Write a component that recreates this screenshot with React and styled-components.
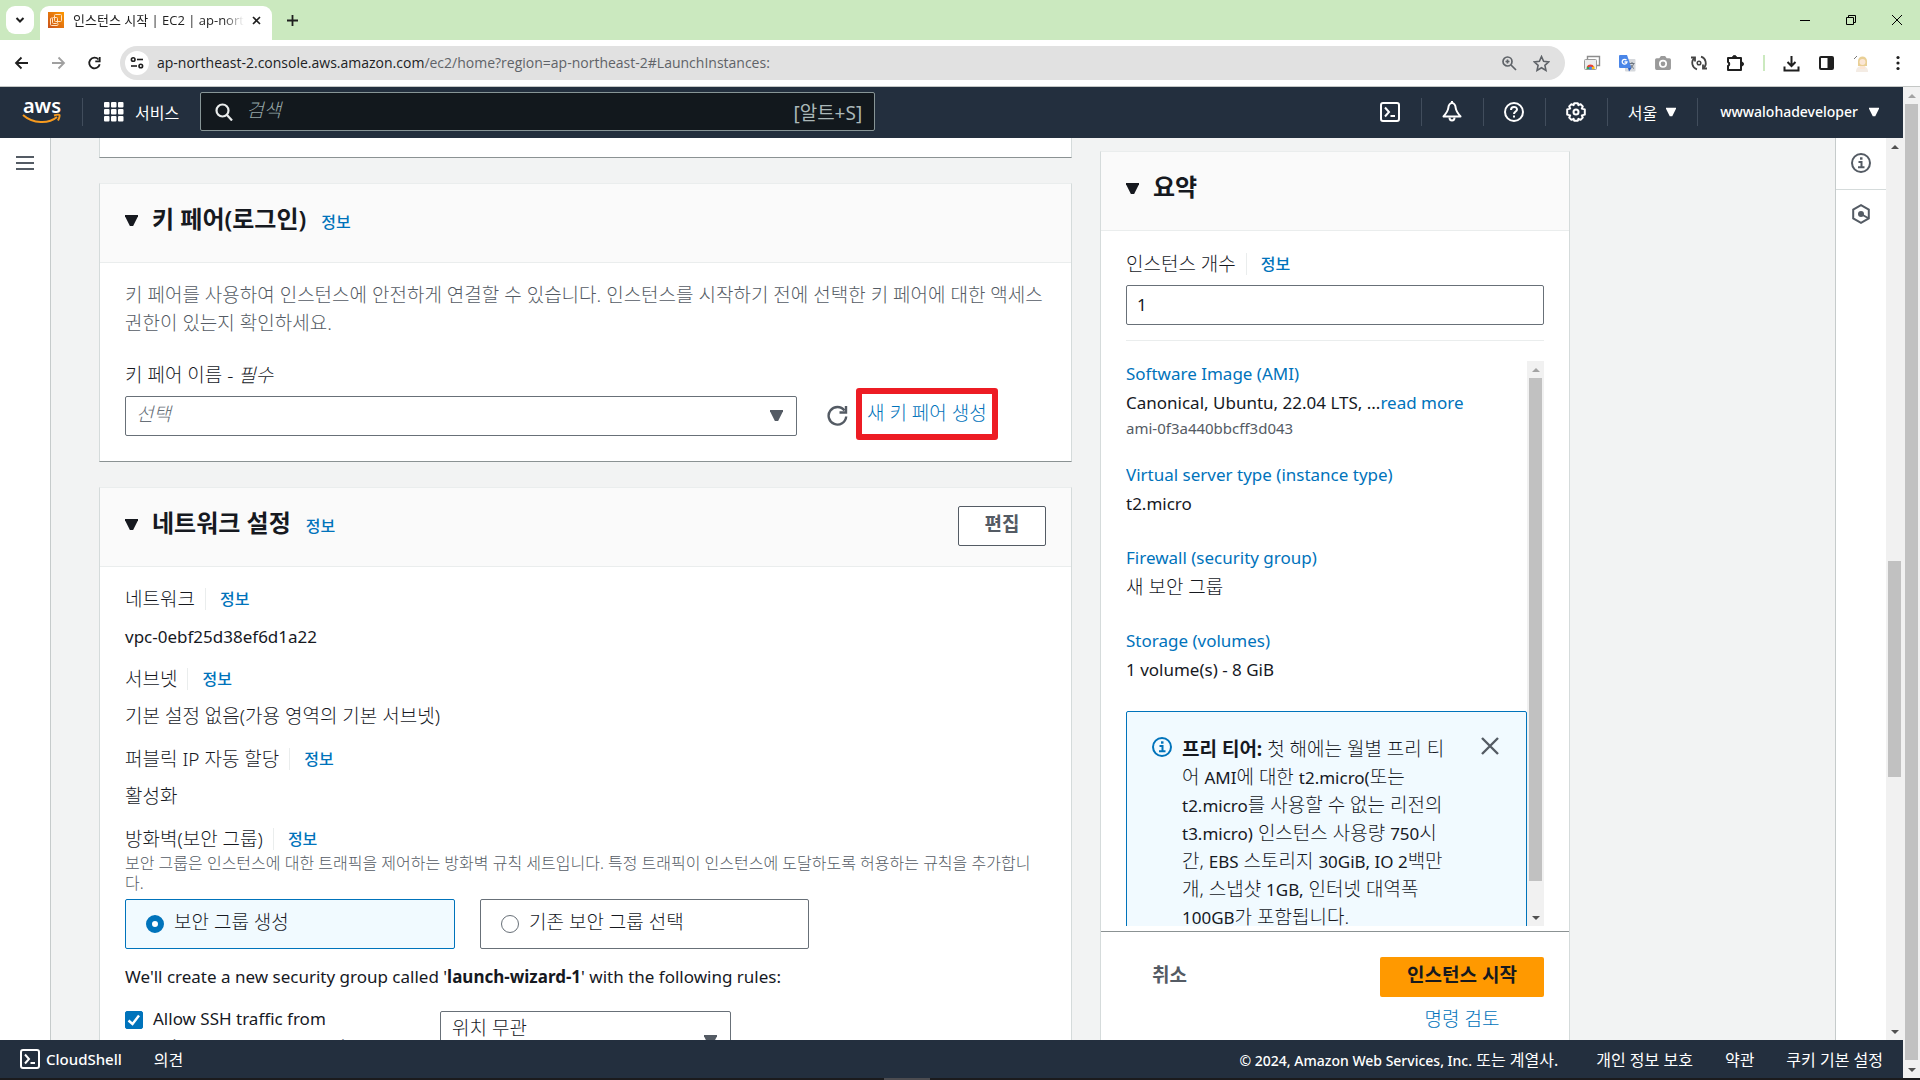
import React, { Component } from "react";
import styled, { createGlobalStyle, ThemeProvider } from "styled-components";

const theme = {
  white: "#ffffff",
  dark: "#16191f",
  nav: "#232f3e",
  grey: "#545b64",
  muted: "#687078",
  page: "#f2f3f3",
  line: "#eaeded",
  link: "#0073bb",
  orange: "#ff9900",
  font: {
    family: '"Noto Sans", "Noto Sans CJK KR", sans-serif',
    browser: '"Open Sans", "Noto Sans CJK KR", sans-serif',
    size: { xs: "15px", s: "16px", m: "17px", l: "19px", xl: "24px" }
  }
};

const GlobalStyle = createGlobalStyle`
  * {
    box-sizing: border-box;
  }
  body {
    margin: 0;
    overflow: hidden;
    font-family: ${theme.font.family};
    font-size: ${theme.font.size.l};
    color: ${theme.dark};
  }
  button, input, select {
    font: inherit;
    color: inherit;
    margin: 0;
  }
  a {
    text-decoration: none;
    color: ${theme.link};
  }
  b {
    font-weight: 700;
  }
  h2, p, dl, dd, dt {
    margin: 0;
  }
  svg {
    display: block;
    flex: none;
  }
`;

const Window = styled.div`
  height: 100vh;
  display: flex;
  flex-direction: column;
  overflow: hidden;
  background: ${({ theme }) => theme.white};
`;

/* browser chrome */

const TabStrip = styled.div`
  height: 40px;
  flex: none;
  display: flex;
  align-items: flex-start;
  padding: 6px 18px 0 6px;
  background: #cbe9bf;
`;
const TabSearch = styled.button`
  width: 28px;
  height: 28px;
  border: none;
  border-radius: 9px;
  padding: 0;
  display: flex;
  align-items: center;
  justify-content: center;
  background: ${({ theme }) => theme.white};
`;
const Tab = styled.div`
  width: 232px;
  height: 34px;
  margin-left: 6px;
  padding: 0 11px 6px 8px;
  display: flex;
  align-items: center;
  border-radius: 9px 9px 0 0;
  background: ${({ theme }) => theme.white};
`;
const TabTitle = styled.span`
  flex: 1;
  margin: 0 8px 0 9px;
  overflow: hidden;
  white-space: nowrap;
  font-family: ${({ theme }) => theme.font.browser};
  font-size: 13px;
  line-height: 20px;
  color: #1f1f1f;
  mask-image: linear-gradient(to right, #000 88%, transparent);
`;
const PlainButton = styled.button`
  border: none;
  padding: 0;
  background: none;
  display: flex;
  align-items: center;
  justify-content: center;
  cursor: pointer;
`;
const NewTab = styled(PlainButton)`
  height: 28px;
  margin-left: 15px;
`;
const WindowButtons = styled.div`
  height: 28px;
  display: flex;
  align-items: center;
  gap: 36px;
  margin-left: auto;
`;
const Toolbar = styled.div`
  height: 47px;
  flex: none;
  display: flex;
  align-items: center;
  padding: 0 13px;
  border-bottom: 1px solid #c4c7c5;
`;
const ToolbarNav = styled.div`
  display: flex;
  gap: 20px;
  margin-right: 17px;
`;
const AddressBar = styled.div`
  flex: 1;
  height: 34px;
  display: flex;
  align-items: center;
  padding: 0 15px 0 5px;
  border-radius: 17px;
  background: #e1e1e1;
`;
const SiteInfo = styled(PlainButton)`
  width: 24px;
  height: 24px;
  border-radius: 12px;
  background: ${({ theme }) => theme.white};
`;
const Url = styled.span`
  flex: 1;
  margin-left: 8px;
  font-family: ${({ theme }) => theme.font.browser};
  font-size: 14px;
  line-height: 20px;
  color: #5f6368;
`;
const UrlHost = styled.span`
  color: #202124;
`;
const AddressIcons = styled.div`
  display: flex;
  gap: 16px;
`;
const Extensions = styled.div`
  display: flex;
  align-items: center;
  gap: 18px;
  margin-left: 18px;
`;
const ExtensionsLine = styled.span`
  width: 2px;
  height: 16px;
  background: #cbe9bf;
`;

/* scrollbars are drawn so that they look alike everywhere */

const Bar = styled.div`
  width: 17px;
  flex: none;
  display: flex;
  flex-direction: column;
  align-items: center;
  background: #f1f1f1;
`;
const BarArrow = styled.span`
  height: 17px;
  flex: none;
  display: flex;
  align-items: center;
`;
const BarTrack = styled.span`
  flex: 1;
  display: flex;
  flex-direction: column;
`;
const BarSpace = styled.span`
  flex: ${({ $grow }) => $grow};
`;
const BarThumb = styled.span`
  flex: ${({ $grow }) => $grow};
  width: 13px;
  background: #c1c1c1;
`;

/* console frame */

const Viewport = styled.div`
  flex: 1;
  min-height: 0;
  display: flex;
`;
const Console = styled.div`
  flex: 1;
  min-width: 0;
  display: flex;
  flex-direction: column;
`;
const NavBar = styled.header`
  height: 51px;
  flex: none;
  display: flex;
  align-items: center;
  padding: 0 0 2px 22px;
  background: ${({ theme }) => theme.nav};
  color: ${({ theme }) => theme.white};
`;
const Logo = styled.a`
  width: 40px;
  display: flex;
  flex-direction: column;
  align-items: center;
  margin-right: 20px;
  font-size: 20px;
  font-weight: 600;
  line-height: 14px;
  color: ${({ theme }) => theme.white};
`;
const NavLine = styled.span`
  width: 1px;
  height: 28px;
  background: #414d5c;
`;
const Services = styled(PlainButton)`
  gap: 11px;
  margin: 0 21px;
  font-size: ${({ theme }) => theme.font.size.s};
`;
const Search = styled.label`
  flex: 0 1 675px;
  height: 39px;
  display: flex;
  align-items: center;
  padding: 0 12px 0 14px;
  border: 1px solid #879596;
  border-radius: 2px;
  background: #12181d;
  color: #aab7b8;
`;
const SearchInput = styled.input`
  flex: 1;
  min-width: 0;
  height: 30px;
  margin-left: 13px;
  padding: 0 0 3px;
  border: none;
  outline: none;
  background: none;
  &::placeholder {
    color: #95a5a6;
    font-style: italic;
    font-weight: 300;
    opacity: 1;
  }
`;
const NavRight = styled.div`
  display: flex;
  align-items: center;
  margin-left: auto;
`;
const NavItem = styled(PlainButton)`
  height: 28px;
  padding: 0 21px 0 20px;
  gap: 9px;
  border-left: ${({ $first }) => ($first ? "none" : "1px solid #414d5c")};
  font-size: ${({ theme }) => theme.font.size.s};
`;
const Account = styled(NavItem)`
  padding: 0 24px 0 22px;
  gap: 11px;
`;
const Middle = styled.div`
  flex: 1;
  min-height: 0;
  display: flex;
`;
const Rail = styled.nav`
  width: 51px;
  flex: none;
  display: flex;
  flex-direction: column;
  background: ${({ theme }) => theme.white};
  border: solid #c6cbcb;
  border-width: ${({ $side }) => ($side === "left" ? "0 1px 0 0" : "0 0 0 1px")};
`;
const RailButton = styled(PlainButton)`
  height: 51px;
  padding-bottom: 2px;
  color: ${({ theme }) => theme.grey};
  & + & {
    border-top: 1px solid #d5dbdb;
  }
`;
const Content = styled.main`
  flex: 1;
  min-width: 0;
  overflow: hidden;
  padding-left: 48px;
  background: ${({ theme }) => theme.page};
`;
const Columns = styled.div`
  height: 100%;
  max-width: 1471px;
  display: grid;
  grid-template-columns: minmax(0, 1fr) 470px;
  gap: 28px;
`;
const Forms = styled.div`
  display: flex;
  flex-direction: column;
  gap: 25px;
  min-height: 0;
`;
const Card = styled.section`
  flex: none;
  background: ${({ theme }) => theme.white};
  border: 1px solid #d5dbdb;
  border-top-color: ${({ theme }) => theme.line};
  border-bottom-color: #8b9293;
`;
const CardTail = styled(Card)`
  height: 20px;
  border-top: none;
`;
const CardHeader = styled.div`
  height: 79px;
  flex: none;
  display: flex;
  align-items: center;
  padding: 0 25px 2px;
  background: #fafafa;
  border-bottom: 1px solid ${({ theme }) => theme.line};
  > svg {
    margin-bottom: 3px;
  }
`;
const CardTitle = styled.h2`
  margin: 0 15px 6px 14px;
  font-size: ${({ theme }) => theme.font.size.xl};
  font-weight: 600;
  line-height: 32px;
`;
const Info = styled.a`
  font-size: ${({ theme }) => theme.font.size.s};
  font-weight: 500;
  line-height: 22px;
`;
const CardBody = styled.div`
  padding: 18px 25px 25px;
  font-weight: 300;
`;
const Description = styled.p`
  line-height: 28px;
  color: ${({ theme }) => theme.grey};
`;
const FieldLabel = styled.label`
  display: block;
  margin-top: 24px;
  line-height: 28px;
`;
const Field = styled.div`
  display: flex;
  align-items: center;
  margin-top: 7px;
`;
const SelectBox = styled.div`
  position: relative;
  width: ${({ $width }) => $width};
  color: ${({ theme }) => theme.grey};
`;
const Select = styled.select`
  width: 100%;
  height: ${({ $tall }) => ($tall ? "60px" : "40px")};
  padding: ${({ $tall }) => ($tall ? "0 11px 26px" : "0 10px 5px")};
  appearance: none;
  border: 1px solid ${({ theme }) => theme.muted};
  border-radius: 2px;
  background: ${({ theme }) => theme.white};
  font-style: ${({ $empty }) => ($empty ? "italic" : "normal")};
  color: ${({ $empty, theme }) => ($empty ? theme.muted : theme.dark)};
`;
const SelectArrow = styled.span`
  position: absolute;
  right: 14px;
  top: 0;
  bottom: 0;
  display: flex;
  align-items: center;
  padding-bottom: 2px;
  pointer-events: none;
`;
const Refresh = styled(PlainButton)`
  margin: 0 8px 0 30px;
  padding-bottom: 2px;
  color: ${({ theme }) => theme.grey};
`;
const Highlight = styled.a`
  height: 52px;
  margin: -8px 0 -4px;
  padding: 0 5px;
  border: 6px solid #ed1c24;
  border-radius: 3px;
  line-height: 38px;
`;
const Edit = styled.button`
  width: 88px;
  height: 40px;
  margin-left: auto;
  padding: 0 0 6px;
  border: 1px solid ${({ theme }) => theme.grey};
  border-radius: 2px;
  background: ${({ theme }) => theme.white};
  color: ${({ theme }) => theme.grey};
  font-size: ${({ theme }) => theme.font.size.l};
  font-weight: 600;
`;
const Term = styled.dt`
  display: flex;
  align-items: center;
  line-height: 28px;
`;
const TermInfo = styled(Info)`
  margin-left: 10px;
  padding-left: 14px;
  border-left: 1px solid ${({ theme }) => theme.line};
`;
const Detail = styled.dd`
  height: 28px;
  margin: 9px 0 15px;
  line-height: 28px;
`;
const English = styled.span`
  font-size: ${({ theme }) => theme.font.size.m};
  font-weight: 400;
  line-height: 1;
`;
const Hint = styled.p`
  margin-bottom: 6px;
  font-size: ${({ theme }) => theme.font.size.s};
  line-height: 20px;
  color: ${({ theme }) => theme.grey};
`;
const Tiles = styled.div`
  display: grid;
  grid-template-columns: 330px 329px;
  gap: 25px;
`;
const Tile = styled.label`
  height: 50px;
  display: flex;
  align-items: center;
  gap: 10px;
  padding: 0 20px;
  border: 1px solid ${({ $on, theme }) => ($on ? theme.link : theme.muted)};
  border-radius: 2px;
  background: ${({ $on, theme }) => ($on ? "#f1faff" : theme.white)};
`;
const TileText = styled.span`
  padding-bottom: 6px;
`;
const Radio = styled.input`
  appearance: none;
  width: 18px;
  height: 18px;
  border-radius: 50%;
  border: 1px solid ${({ theme }) => theme.muted};
  background: ${({ theme }) => theme.white};
  &:checked {
    border: 6px solid ${({ theme }) => theme.link};
  }
`;
const Sentence = styled.p`
  margin: 14px 0;
  font-size: ${({ theme }) => theme.font.size.m};
  font-weight: 400;
  line-height: 28px;
`;
const RuleRow = styled.div`
  display: grid;
  grid-template-columns: 288px 291px;
  gap: 27px;
  align-items: start;
  margin-top: 20px;
`;
const CheckLabel = styled.label`
  display: grid;
  grid-template-columns: 18px 1fr;
  column-gap: 10px;
  align-items: start;
  font-size: ${({ theme }) => theme.font.size.m};
  font-weight: 400;
  line-height: 15px;
`;
const CheckBox = styled.span`
  position: relative;
  width: 18px;
  height: 18px;
`;
const Check = styled.input`
  appearance: none;
  display: block;
  width: 18px;
  height: 18px;
  border-radius: 2px;
  border: 1px solid ${({ theme }) => theme.muted};
  &:checked {
    border-color: ${({ theme }) => theme.link};
    background: ${({ theme }) => theme.link};
  }
`;
const CheckMark = styled.svg`
  position: absolute;
  left: 0;
  top: 0;
  pointer-events: none;
`;
const CheckHint = styled.span`
  grid-column: 2;
  margin-top: 5px;
  font-size: ${({ theme }) => theme.font.size.xs};
  line-height: 20px;
  color: ${({ theme }) => theme.muted};
`;

/* summary */

const Summary = styled(Card)`
  display: flex;
  flex-direction: column;
  min-height: 0;
  margin-top: 13px;
  border-bottom: none;
`;
const SummaryBody = styled.div`
  flex: 1;
  min-height: 0;
  display: flex;
  flex-direction: column;
  padding: 19px 25px 5px;
  font-weight: 300;
`;
const SummaryLabel = styled.div`
  display: flex;
  align-items: center;
  line-height: 28px;
`;
const CountInput = styled.input`
  height: 40px;
  flex: none;
  margin: 7px 0 15px;
  padding: 0 10px 1px;
  border: 1px solid ${({ theme }) => theme.muted};
  border-radius: 2px;
  font-size: ${({ theme }) => theme.font.size.m};
  font-weight: 400;
`;
const ScrollArea = styled.div`
  flex: 1;
  min-height: 0;
  display: flex;
  padding-top: 20px;
  border-top: 1px solid ${({ theme }) => theme.line};
`;
const ScrollContent = styled.div`
  flex: 1;
  min-width: 0;
  overflow: hidden;
`;
const Choice = styled.div`
  margin-bottom: 25px;
`;
const ChoiceLink = styled.a`
  display: block;
  font-size: ${({ theme }) => theme.font.size.m};
  font-weight: 400;
  line-height: 26px;
`;
const ChoiceValue = styled.p`
  font-size: ${({ theme, $korean }) => ($korean ? theme.font.size.l : theme.font.size.m)};
  font-weight: ${({ $korean }) => ($korean ? 300 : 400)};
  line-height: 32px;
`;
const ChoiceNote = styled.p`
  font-size: ${({ theme }) => theme.font.size.xs};
  font-weight: 400;
  line-height: 18px;
  color: ${({ theme }) => theme.grey};
`;
const Alert = styled.div`
  display: flex;
  align-items: flex-start;
  padding: 23px 25px;
  border: 1px solid ${({ theme }) => theme.link};
  border-radius: 2px;
  background: #f1faff;
`;
const AlertText = styled.p`
  flex: 1;
  margin: 0 26px 0 10px;
  line-height: 28px;
`;
const AlertIcon = styled.span`
  margin-top: 2px;
  color: ${({ theme }) => theme.link};
`;
const Close = styled(PlainButton)`
  margin: 2px 2px 0 0;
  color: ${({ theme }) => theme.grey};
`;
const SummaryFooter = styled.div`
  height: 109px;
  flex: none;
  display: flex;
  align-items: flex-start;
  justify-content: space-between;
  padding: 25px 25px 0 51px;
  border-top: 1px solid #8b9293;
`;
const Cancel = styled(PlainButton)`
  height: 34px;
  color: ${({ theme }) => theme.grey};
  font-weight: 600;
`;
const LaunchGroup = styled.div`
  display: flex;
  flex-direction: column;
  align-items: center;
`;
const Launch = styled.button`
  width: 164px;
  height: 40px;
  padding: 0 0 6px;
  border: none;
  border-radius: 2px;
  background: ${({ theme }) => theme.orange};
  font-weight: 600;
`;
const Review = styled.a`
  margin-top: 8px;
  font-weight: 300;
  line-height: 28px;
`;

const Footer = styled.footer`
  height: 38px;
  flex: none;
  display: flex;
  align-items: center;
  gap: 32px;
  padding: 0 20px 1px;
  background: ${({ theme }) => theme.nav};
  color: ${({ theme }) => theme.white};
  font-size: ${({ theme }) => theme.font.size.s};
`;
const FooterLink = styled.a`
  display: flex;
  align-items: center;
  gap: 6px;
  color: ${({ theme }) => theme.white};
`;
const Latin = styled.span`
  font-size: ${({ $big, theme }) => ($big ? theme.font.size.xs : "14px")};
  font-weight: 500;
`;
const Copyright = styled.span`
  margin: 0 6px 0 auto;
`;
const Taskbar = styled.div`
  height: 2px;
  flex: none;
  display: flex;
  justify-content: center;
  background: #1b1b1d;
`;
const TaskbarItem = styled.span`
  width: 46px;
  margin-right: 106px;
  background: #4c4c50;
`;

/* icons */

const Triangle = ({ size = 13, color = "currentColor" }) => (
  <svg width={size} height={size} viewBox="0 0 12 12">
    <path d="M0 1h12v1L7.500 11h-3L0 2z" fill={color} />
  </svg>
);

const ShellIcon = () => (
  <svg width="20" height="20" viewBox="0 0 20 20" fill="none" stroke="#fff" strokeWidth="2">
    <rect x="1" y="1" width="18" height="18" rx="2" />
    <path d="M5 5.500L9 10l-4 4.500M10.500 14H15" />
  </svg>
);

const InfoIcon = () => (
  <svg width="20" height="20" viewBox="0 0 20 20" fill="none" stroke="currentColor" strokeWidth="2">
    <circle cx="10" cy="10" r="9" />
    <path d="M9 5.500h2.500" strokeWidth="2.400" />
    <path d="M7.500 9h3v5M7 14.200h6.500" />
  </svg>
);

const ScrollBar = ({ before, thumb, after, dimTop }) => (
  <Bar>
    <BarArrow>
      <svg width="8" height="4" viewBox="0 0 8 4">
        <path d="M0 4l4-4 4 4z" fill={dimTop ? "#a3a3a3" : "#505050"} />
      </svg>
    </BarArrow>
    <BarTrack>
      <BarSpace $grow={before} />
      <BarThumb $grow={thumb} />
      <BarSpace $grow={after} />
    </BarTrack>
    <BarArrow>
      <svg width="8" height="4" viewBox="0 0 8 4">
        <path d="M0 0l4 4 4-4z" fill="#505050" />
      </svg>
    </BarArrow>
  </Bar>
);

const BrowserTabs = () => (
  <TabStrip>
    <TabSearch aria-label="tabs">
      <svg width="10" height="8" viewBox="0 0 10 8" fill="none" stroke="#1f1f1f" strokeWidth="2">
        <path d="M1.500 2L5 5.500 8.500 2" />
      </svg>
    </TabSearch>
    <Tab>
      <svg width="16" height="16" viewBox="0 0 16 16">
        <defs>
          <linearGradient id="ec2" x1="0" y1="1" x2="1" y2="0">
            <stop offset="0" stopColor="#c8511b" />
            <stop offset="1" stopColor="#ff9900" />
          </linearGradient>
        </defs>
        <rect width="16" height="16" fill="url(#ec2)" />
        <g fill="none" stroke="#ffe3c2">
          <rect x="6.500" y="2.500" width="7" height="7" rx="1" />
          <path d="M4.500 6h-1a1 1 0 0 0-1 1v5.500a1 1 0 0 0 1 1H9a1 1 0 0 0 1-1v-1" />
          <rect x="4.500" y="5.500" width="5" height="6" rx="1" />
        </g>
      </svg>
      <TabTitle>인스턴스 시작 | EC2 | ap-northeast-2</TabTitle>
      <PlainButton aria-label="close tab">
        <svg width="9" height="9" viewBox="0 0 9 9" stroke="#1f1f1f" strokeWidth="1.600">
          <path d="M1 1l7 7M8 1L1 8" />
        </svg>
      </PlainButton>
    </Tab>
    <NewTab aria-label="new tab">
      <svg width="11" height="11" viewBox="0 0 11 11" stroke="#1f1f1f" strokeWidth="1.800">
        <path d="M5.500 0v11M0 5.500h11" />
      </svg>
    </NewTab>
    <WindowButtons>
      <PlainButton aria-label="minimize">
        <svg width="10" height="10" viewBox="0 0 10 10" stroke="#000">
          <path d="M0 5.500h10" />
        </svg>
      </PlainButton>
      <PlainButton aria-label="restore">
        <svg width="10" height="10" viewBox="0 0 10 10" fill="none" stroke="#000">
          <path d="M0.500 2.500h7v7h-7zM2.500 2.500v-2h7v7h-2" />
        </svg>
      </PlainButton>
      <PlainButton aria-label="close">
        <svg width="10" height="10" viewBox="0 0 10 10" stroke="#000">
          <path d="M0 0l10 10M10 0L0 10" />
        </svg>
      </PlainButton>
    </WindowButtons>
  </TabStrip>
);

const BrowserToolbar = () => (
  <Toolbar>
    <ToolbarNav>
      <PlainButton aria-label="back">
        <svg width="17" height="16" viewBox="0 0 17 16" fill="none" stroke="#1f1f1f" strokeWidth="1.800">
          <path d="M15 8H3M8.500 2.500L3 8l5.500 5.500" />
        </svg>
      </PlainButton>
      <PlainButton aria-label="forward">
        <svg width="17" height="16" viewBox="0 0 17 16" fill="none" stroke="#a0a0a0" strokeWidth="1.800">
          <path d="M2 8h12M8.500 2.500L14 8l-5.500 5.500" />
        </svg>
      </PlainButton>
      <PlainButton aria-label="reload">
        <svg width="16" height="16" viewBox="0 0 16 16" fill="none" stroke="#1f1f1f" strokeWidth="1.800">
          <path d="M12.700 9.200A5.300 5.300 0 1 1 11.500 4.500" />
          <path d="M12.700 2v4.400H8.300" />
        </svg>
      </PlainButton>
    </ToolbarNav>
    <AddressBar>
      <SiteInfo aria-label="site information">
        <svg width="14" height="14" viewBox="0 0 14 14" fill="none" stroke="#1f1f1f" strokeWidth="1.600">
          <circle cx="3.200" cy="3.500" r="1.800" />
          <path d="M7 3.500h6" />
          <circle cx="10.800" cy="10" r="1.800" />
          <path d="M1 10h6" />
        </svg>
      </SiteInfo>
      <Url>
        <UrlHost>ap-northeast-2.console.aws.amazon.com</UrlHost>
        /ec2/home?region=ap-northeast-2#LaunchInstances:
      </Url>
      <AddressIcons>
        <svg width="16" height="16" viewBox="0 0 16 16" fill="none" stroke="#5f6368" strokeWidth="1.700">
          <circle cx="6.500" cy="6.500" r="4.500" />
          <path d="M10 10l5 5M6.500 4.500v4M4.500 6.500h4" />
        </svg>
        <svg width="17" height="17" viewBox="0 0 16 16" fill="none" stroke="#5f6368" strokeWidth="1.500">
          <path d="M8 1.500l2 4.500 4.800.5-3.600 3.200 1 4.800L8 12l-4.200 2.500 1-4.800L1.200 6.500 6 6z" />
        </svg>
      </AddressIcons>
    </AddressBar>
    <Extensions>
      <svg width="18" height="16" viewBox="0 0 18 16">
        <path d="M4.500 4V1.500h12v9H14" fill="#fff" stroke="#8c8c8c" strokeWidth="1.400" />
        <rect x="1.500" y="4.500" width="12" height="10" rx="1" fill="#ededed" stroke="#9a9a9a" />
        <path d="M3.500 14a4 4 0 0 1 2-4l2 4z" fill="#34a853" />
        <path d="M3.800 12a4 4 0 0 1 7.400 0l-3.700.5z" fill="#ea4335" />
        <path d="M11.500 14a4 4 0 0 0-.5-3L7.500 14z" fill="#fbbc04" />
        <circle cx="7.500" cy="13" r="1.500" fill="#4285f4" />
      </svg>
      <svg width="17" height="17" viewBox="0 0 17 17">
        <rect x="6" y="4" width="10.500" height="12.500" rx="1" fill="#d5d8dc" />
        <path d="M0 1a1 1 0 0 1 1-1h7l4.500 13H1a1 1 0 0 1-1-1z" fill="#4a86e8" />
        <path d="M9 13h3.500L10 16.500z" fill="#2c5fc0" />
        <path d="M7.500 5.200A2.400 2.400 0 1 0 8 7H5.500" fill="none" stroke="#fff" strokeWidth="1.300" />
        <path d="M10.500 8.500h5M13 7v1.500M14.700 8.500c-.5 2-2 3.500-3 4.500M12 10c.5 1.500 2 3 3 3.500" fill="none" stroke="#6b7480" />
      </svg>
      <svg width="18" height="16" viewBox="0 0 17 15">
        <path d="M2.500 3H5l1.500-2h4L12 3h2.500A1.500 1.500 0 0 1 16 4.500v8a1.500 1.500 0 0 1-1.500 1.500h-12A1.500 1.500 0 0 1 1 12.500v-8A1.500 1.500 0 0 1 2.500 3z" fill="#9a9a9a" />
        <circle cx="8.500" cy="8.300" r="3" fill="none" stroke="#fff" strokeWidth="1.600" />
      </svg>
      <svg width="18" height="18" viewBox="0 0 18 18" fill="none" stroke="#444" strokeWidth="1.800">
        <path d="M11 2.700A6.600 6.600 0 0 1 13.500 14M7 15.300A6.600 6.600 0 0 1 4.500 4" />
        <path d="M17 14.500h-4V10.500M1 3.500h4V7.500" />
        <circle cx="9" cy="9" r="1.800" strokeWidth="1.500" />
      </svg>
      <svg width="19" height="18" viewBox="0 0 19 18" fill="none" stroke="#1f1f1f" strokeWidth="2">
        <path d="M2 4h13v12H2v-4a2.200 2.200 0 0 0 0-4z" strokeLinejoin="round" />
        <path d="M6.500 3.500a2 2 0 0 1 4 0zM15.500 8a2 2 0 0 1 0 4z" fill="#1f1f1f" strokeWidth="1" />
      </svg>
      <ExtensionsLine />
      <svg width="17" height="17" viewBox="0 0 17 17" fill="none" stroke="#1f1f1f" strokeWidth="2">
        <path d="M8.500 1v9M4.500 7l4 4 4-4M1.500 11.500V15.500h14v-4" />
      </svg>
      <svg width="17" height="16" viewBox="0 0 17 16" fill="none" stroke="#1f1f1f" strokeWidth="2">
        <rect x="2" y="2" width="13" height="12" rx="1" />
        <path d="M12 2v12" strokeWidth="5" />
      </svg>
      <svg width="18" height="18" viewBox="0 0 18 18">
        <path d="M3 18c0-5 3-6 6-6s6 1 6 6z" fill="#f4ece4" />
        <path d="M5 7a4.500 4.500 0 0 1 9 0v5H5z" fill="#e9cf95" />
        <circle cx="9.500" cy="8" r="3" fill="#fbe6d5" />
        <path d="M1 5l3-3" stroke="#777" />
        <path d="M7 12h5v3H7z" fill="#fbe6d5" />
      </svg>
      <svg width="18" height="18" viewBox="0 0 18 18" fill="#1f1f1f">
        <circle cx="9" cy="3.500" r="1.600" />
        <circle cx="9" cy="9" r="1.600" />
        <circle cx="9" cy="14.500" r="1.600" />
      </svg>
    </Extensions>
  </Toolbar>
);

const ConsoleNav = () => (
  <NavBar>
    <Logo href="#">
      aws
      <svg width="40" height="12" viewBox="0 0 40 12" fill="none" stroke="#f79b1f" strokeWidth="2">
        <path d="M1 2c10 9 26 9 34 2" />
        <path d="M32 2.500c6-2 7-1 4 5" />
      </svg>
    </Logo>
    <NavLine />
    <Services>
      <svg width="20" height="20" viewBox="0 0 20 20" fill="#fff">
        {[0, 7, 14].map(y =>
          [0, 7, 14].map(x => (
            <rect key={`${x}-${y}`} x={x} y={y} width="5.500" height="5.500" rx="1" />
          ))
        )}
      </svg>
      서비스
    </Services>
    <Search>
      <svg width="18" height="18" viewBox="0 0 18 18" fill="none" stroke="#eaeded" strokeWidth="2.200">
        <circle cx="7.500" cy="7.500" r="6" />
        <path d="M12 12l5 5.500" />
      </svg>
      <SearchInput placeholder="검색" aria-label="검색" />
      <span>[알트+S]</span>
    </Search>
    <NavRight>
      <NavItem $first aria-label="CloudShell">
        <ShellIcon />
      </NavItem>
      <NavItem aria-label="notifications">
        <svg width="20" height="21" viewBox="0 0 20 21" fill="none" stroke="#fff" strokeWidth="2">
          <path d="M10 2C8 2 6.500 4.500 6.300 7 6 10 4 12.500 1.500 15.500h17C16 12.500 14 10 13.700 7 13.500 4.500 12 2 10 2z" strokeLinejoin="round" />
          <path d="M10 0v2M7.500 16.500c0 4 5 4 5 0" />
        </svg>
      </NavItem>
      <NavItem aria-label="help">
        <svg width="20" height="20" viewBox="0 0 20 20" fill="none" stroke="#fff" strokeWidth="2">
          <circle cx="10" cy="10" r="9" />
          <path d="M7 8c0-4 6-4 6-.5 0 2-3 2-3 4.500M10 13.500v2" />
        </svg>
      </NavItem>
      <NavItem aria-label="settings">
        <svg width="20" height="20" viewBox="0 0 20 20" fill="none" stroke="#fff" strokeWidth="2" strokeLinejoin="round">
          <path d="M8.200 1.200h3.600l.6 2 2.200-1 2.200 2.200-1 2.200 3 .8v5.200l-3 .8 1 2.200-2.200 2.200-2.200-1-.6 2H8.200l-.6-2-2.200 1-2.200-2.200 1-2.200-3-.8V7.400l3-.8-1-2.200 2.200-2.200 2.200 1z" />
          <circle cx="10" cy="10" r="2.500" />
        </svg>
      </NavItem>
      <NavItem>
        서울
        <Triangle size={10} />
      </NavItem>
      <Account>
        <Latin>wwwalohadeveloper</Latin>
        <Triangle size={10} />
      </Account>
    </NavRight>
  </NavBar>
);

class KeyPairCard extends Component {
  render() {
    return (
      <Card>
        <CardHeader>
          <Triangle />
          <CardTitle>키 페어(로그인)</CardTitle>
          <Info href="#">정보</Info>
        </CardHeader>
        <CardBody>
          <Description>
            키 페어를 사용하여 인스턴스에 안전하게 연결할 수 있습니다. 인스턴스를 시작하기 전에 선택한 키 페어에 대한 액세스 권한이 있는지 확인하세요.
          </Description>
          <FieldLabel htmlFor="keyPair">
            키 페어 이름 - <i>필수</i>
          </FieldLabel>
          <Field>
            <SelectBox $width="672px">
              <Select id="keyPair" $empty>
                <option>선택</option>
              </Select>
              <SelectArrow>
                <Triangle />
              </SelectArrow>
            </SelectBox>
            <Refresh aria-label="refresh">
              <svg width="21" height="21" viewBox="0 0 21 21" fill="none" stroke="currentColor" strokeWidth="2.400">
                <path d="M19.200 11.500A8.800 8.800 0 1 1 17.500 5.500" />
                <path d="M19 1v6.500h-6.500" />
              </svg>
            </Refresh>
            <Highlight href="#">새 키 페어 생성</Highlight>
          </Field>
        </CardBody>
      </Card>
    );
  }
}

class NetworkCard extends Component {
  state = {
    group: "create",
    ssh: true
  };
  handleGroup = e => {
    this.setState({ group: e.target.value });
  };
  handleSsh = () => {
    this.setState({ ssh: !this.state.ssh });
  };
  render() {
    const { group, ssh } = this.state;
    return (
      <Card>
        <CardHeader>
          <Triangle />
          <CardTitle>네트워크 설정</CardTitle>
          <Info href="#">정보</Info>
          <Edit>편집</Edit>
        </CardHeader>
        <CardBody>
          <dl>
            <Term>
              네트워크<TermInfo href="#">정보</TermInfo>
            </Term>
            <Detail>
              <English>vpc-0ebf25d38ef6d1a22</English>
            </Detail>
            <Term>
              서브넷<TermInfo href="#">정보</TermInfo>
            </Term>
            <Detail>기본 설정 없음(가용 영역의 기본 서브넷)</Detail>
            <Term>
              퍼블릭 IP 자동 할당<TermInfo href="#">정보</TermInfo>
            </Term>
            <Detail>활성화</Detail>
            <Term>
              방화벽(보안 그룹)<TermInfo href="#">정보</TermInfo>
            </Term>
          </dl>
          <Hint>
            보안 그룹은 인스턴스에 대한 트래픽을 제어하는 방화벽 규칙 세트입니다. 특정 트래픽이 인스턴스에 도달하도록 허용하는 규칙을 추가합니다.
          </Hint>
          <Tiles>
            <Tile $on={group === "create"}>
              <Radio type="radio" name="group" value="create" checked={group === "create"} onChange={this.handleGroup} />
              <TileText>보안 그룹 생성</TileText>
            </Tile>
            <Tile $on={group === "existing"}>
              <Radio type="radio" name="group" value="existing" checked={group === "existing"} onChange={this.handleGroup} />
              <TileText>기존 보안 그룹 선택</TileText>
            </Tile>
          </Tiles>
          <Sentence>
            We'll create a new security group called '<b>launch-wizard-1</b>' with the following rules:
          </Sentence>
          <RuleRow>
            <CheckLabel>
              <CheckBox>
                <Check type="checkbox" checked={ssh} onChange={this.handleSsh} />
                <CheckMark width="18" height="18" viewBox="0 0 18 18" fill="none" stroke="#fff" strokeWidth="2.400">
                  <path d="M3.500 9.500L7.500 13 14 4.500" />
                </CheckMark>
              </CheckBox>
              Allow SSH traffic from
              <CheckHint>Helps you connect to your instance</CheckHint>
            </CheckLabel>
            <SelectBox $width="100%">
              <Select $tall aria-label="SSH source">
                <option>위치 무관</option>
              </Select>
              <SelectArrow>
                <Triangle />
              </SelectArrow>
            </SelectBox>
          </RuleRow>
        </CardBody>
      </Card>
    );
  }
}

class SummaryCard extends Component {
  state = {
    count: "1"
  };
  handleChange = e => {
    this.setState({ count: e.target.value });
  };
  render() {
    return (
      <Summary as="aside">
        <CardHeader>
          <Triangle />
          <CardTitle>요약</CardTitle>
        </CardHeader>
        <SummaryBody>
          <SummaryLabel>
            <label htmlFor="count">인스턴스 개수</label>
            <TermInfo href="#">정보</TermInfo>
          </SummaryLabel>
          <CountInput id="count" value={this.state.count} onChange={this.handleChange} />
          <ScrollArea>
            <ScrollContent>
              <Choice>
                <ChoiceLink href="#">Software Image (AMI)</ChoiceLink>
                <ChoiceValue>
                  Canonical, Ubuntu, 22.04 LTS, ...<a href="#">read more</a>
                </ChoiceValue>
                <ChoiceNote>ami-0f3a440bbcff3d043</ChoiceNote>
              </Choice>
              <Choice>
                <ChoiceLink href="#">Virtual server type (instance type)</ChoiceLink>
                <ChoiceValue>t2.micro</ChoiceValue>
              </Choice>
              <Choice>
                <ChoiceLink href="#">Firewall (security group)</ChoiceLink>
                <ChoiceValue $korean>새 보안 그룹</ChoiceValue>
              </Choice>
              <Choice>
                <ChoiceLink href="#">Storage (volumes)</ChoiceLink>
                <ChoiceValue>1 volume(s) - 8 GiB</ChoiceValue>
              </Choice>
              <Alert>
                <AlertIcon>
                  <InfoIcon />
                </AlertIcon>
                <AlertText>
                  <b>프리 티어:</b> 첫 해에는 월별 프리 티어 <English>AMI</English>에 대한 <English>t2.micro(</English>또는 <English>t2.micro</English>를 사용할 수 없는 리전의 <English>t3.micro)</English> 인스턴스 사용량 <English>750</English>시간, <English>EBS</English> 스토리지 <English>30GiB, IO 2</English>백만 개, 스냅샷 <English>1GB,</English> 인터넷 대역폭 <English>100GB</English>가 포함됩니다.
                </AlertText>
                <Close aria-label="dismiss">
                  <svg width="18" height="18" viewBox="0 0 18 18" stroke="currentColor" strokeWidth="2.400">
                    <path d="M1 1l16 16M17 1L1 17" />
                  </svg>
                </Close>
              </Alert>
            </ScrollContent>
            <ScrollBar before={0} thumb={503} after={28} dimTop />
          </ScrollArea>
        </SummaryBody>
        <SummaryFooter>
          <Cancel>취소</Cancel>
          <LaunchGroup>
            <Launch>인스턴스 시작</Launch>
            <Review href="#">명령 검토</Review>
          </LaunchGroup>
        </SummaryFooter>
      </Summary>
    );
  }
}

const App = () => (
  <ThemeProvider theme={theme}>
    <GlobalStyle />
    <Window>
      <BrowserTabs />
      <BrowserToolbar />
      <Viewport>
        <Console>
          <ConsoleNav />
          <Middle>
            <Rail $side="left">
              <RailButton aria-label="menu">
                <svg width="18" height="16" viewBox="0 0 18 16" stroke="currentColor" strokeWidth="2">
                  <path d="M0 2h18M0 8h18M0 14h18" />
                </svg>
              </RailButton>
            </Rail>
            <Content>
              <Columns>
                <Forms>
                  <CardTail />
                  <KeyPairCard />
                  <NetworkCard />
                </Forms>
                <SummaryCard />
              </Columns>
            </Content>
            <Rail $side="right">
              <RailButton aria-label="info">
                <InfoIcon />
              </RailButton>
              <RailButton aria-label="tutorials">
                <svg width="18" height="20" viewBox="0 0 18 20" fill="none" stroke="currentColor" strokeWidth="2">
                  <path d="M9 1.200l7.800 4.400v8.800L9 18.800l-7.800-4.400V5.600z" />
                  <circle cx="9" cy="10" r="3" fill="currentColor" stroke="none" />
                  <path d="M9 10l7 4" />
                </svg>
              </RailButton>
            </Rail>
            <ScrollBar before={406} thumb={216} after={246} />
          </Middle>
          <Footer>
            <FooterLink href="#">
              <ShellIcon />
              <Latin $big>CloudShell</Latin>
            </FooterLink>
            <FooterLink href="#">의견</FooterLink>
            <Copyright>
              <Latin>© 2024, Amazon Web Services, Inc.</Latin> 또는 계열사.
            </Copyright>
            <FooterLink href="#">개인 정보 보호</FooterLink>
            <FooterLink href="#">약관</FooterLink>
            <FooterLink href="#">쿠키 기본 설정</FooterLink>
          </Footer>
        </Console>
        <ScrollBar before={0} thumb={956} after={1} dimTop />
      </Viewport>
      <Taskbar>
        <TaskbarItem />
      </Taskbar>
    </Window>
  </ThemeProvider>
);

export default App;
